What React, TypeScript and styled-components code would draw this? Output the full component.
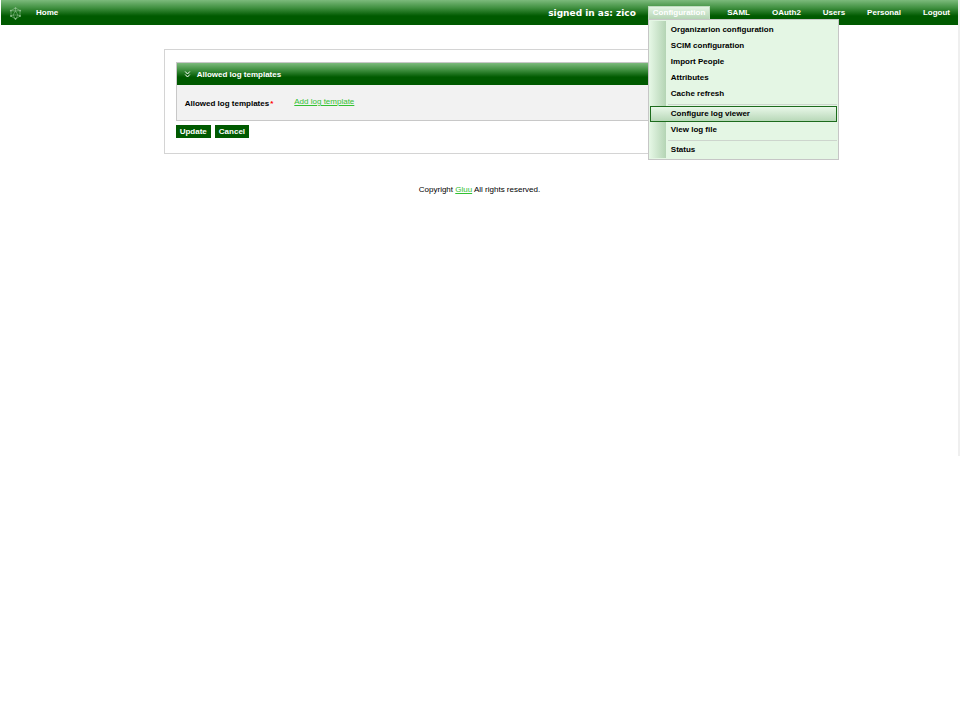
import React from "react";
import styled, { createGlobalStyle, css } from "styled-components";

const GlobalStyle = createGlobalStyle`
  * { box-sizing: border-box; }
  body {
    margin: 0;
    background: #fff;
    color: #000;
    font: 8px/12px "Liberation Sans", Arial, sans-serif;
  }
`;

const barFill = css`
  background: linear-gradient(#7cba7c 0%, #3f8f3f 32%, #005a00 64%, #005a00 100%);
`;

const Page = styled.div`
  min-height: 456px;
  padding-left: 1px;
  border-right: 2px solid #efefef;
`;

const TopBar = styled.header`
  ${barFill}
  display: flex;
  align-items: center;
  height: 25px;
  padding: 0 3px 0 8px;
  color: #fff;
  font-weight: bold;
`;

const HomeLink = styled.a`
  margin-left: 14px;
  color: inherit;
  text-decoration: none;
`;

const SignedIn = styled.span`
  margin: 0 12px 0 auto;
  font: bold 9px/12px "DejaVu Sans", Verdana, sans-serif;
`;

const Nav = styled.nav`
  display: flex;
  gap: 12px;
`;

const NavItem = styled.div`
  position: relative;
`;

const NavButton = styled.button<{ $open?: boolean }>`
  display: block;
  height: 14px;
  padding: 0 4px;
  border: 1px solid ${(p) => (p.$open ? "#c0dcc0" : "transparent")};
  background: ${(p) => (p.$open ? "linear-gradient(#e3f4e3, #b4d4b4)" : "none")};
  color: #fff;
  font: bold 8px/12px "Liberation Sans", Arial, sans-serif;
  white-space: nowrap;
`;

const Menu = styled.div`
  position: absolute;
  z-index: 2;
  top: 100%;
  left: 0;
  width: 191px;
  margin-top: -1px;
  padding: 1px;
  border: 1px solid #c6c6c6;
  background: linear-gradient(90deg, #e4f6e4, #b4d4b4) 1px 1px / 16px calc(100% - 2px) no-repeat #e4f6e4;
`;

const MenuItem = styled.a<{ $active?: boolean }>`
  display: block;
  height: 16px;
  padding-left: 20px;
  border: 1px solid ${(p) => (p.$active ? "#1c6b1c" : "transparent")};
  background: ${(p) => (p.$active ? "linear-gradient(#e8f7e8, #b8d8b8)" : "none")};
  color: #000;
  font-weight: bold;
  line-height: 14px;
  text-decoration: none;
  white-space: nowrap;
`;

const Separator = styled.hr`
  height: 1px;
  margin: 2px 0 1px 18px;
  border: 0;
  background: #cdd5cd;
`;

const MenuGroup = styled.div`
  &:first-child { padding-top: 1px; }
`;

const Box = styled.main`
  width: 66%;
  margin: 24px auto 0;
  padding: 12px 12px 15px 11px;
  border: 1px solid #d4d4d4;
`;

const Panel = styled.section`
  border: 1px solid #c8c8c8;
  background: #f2f2f2;
`;

const PanelHeader = styled.h2`
  ${barFill}
  display: flex;
  align-items: center;
  gap: 6px;
  height: 22px;
  margin: 0;
  padding: 2px 0 0 7px;
  color: #fff;
  font-size: 8px;
`;

const PanelBody = styled.div`
  display: flex;
  gap: 21px;
  height: 35px;
  padding: 11px 8px 0;
`;

const FieldLabel = styled.span`
  padding-top: 2px;
  font-weight: bold;
`;

const Required = styled.span`
  margin-left: 1px;
  color: #f00;
`;

const Link = styled.a`
  color: #32c132;
`;

const Actions = styled.div`
  display: flex;
  gap: 4px;
  margin-top: 4px;
`;

const ActionButton = styled.button`
  height: 13px;
  padding: 1px 4px 0;
  border: 0;
  background: #005a00;
  color: #fff;
  font: bold 8px/12px "Liberation Sans", Arial, sans-serif;
`;

const Footer = styled.footer`
  margin-top: 30px;
  text-align: center;
`;

function Logo() {
  return (
    <svg width="13" height="15" viewBox="0 -2 13 15" fill="none" stroke="#8fc08f" strokeWidth="0.6">
      <path d="M6.5 1 L11 3.5 V9 L6.5 12 L2 9 V3.5 Z M6.5 4 L9 8 H4 Z M2 3.5 L6.5 4 L11 3.5 M2 9 L4 8 M11 9 L9 8 M6.5 1 V4 M6.5 12 L4 8 M6.5 12 L9 8" />
      <g fill="#8fc08f" stroke="none">
        <circle cx="6.5" cy="1.2" r="0.9" />
        <circle cx="1.8" cy="3.6" r="0.9" />
        <circle cx="11.2" cy="3.6" r="0.9" />
        <circle cx="2" cy="9" r="0.9" />
        <circle cx="11" cy="9" r="0.9" />
        <circle cx="6.5" cy="11.8" r="0.9" />
      </g>
    </svg>
  );
}

function Chevrons() {
  return (
    <svg width="7" height="8" viewBox="0 0 7 8" fill="none" stroke="#fff" strokeWidth="1">
      <path d="M1.2 0.5 L3.5 3 L5.8 0.5 M1.2 3.5 L3.5 6 L5.8 3.5" />
    </svg>
  );
}

const menuGroups = [
  ["Organizarion configuration", "SCIM configuration", "Import People", "Attributes", "Cache refresh"],
  ["Configure log viewer", "View log file"],
  ["Status"],
];

export default function App() {
  return (
    <>
      <GlobalStyle />
      <Page>
        <TopBar>
          <Logo />
          <HomeLink href="#">Home</HomeLink>
          <SignedIn>signed in as: zico</SignedIn>
          <Nav>
            <NavItem>
              <NavButton $open aria-expanded="true">Configuration</NavButton>
              <Menu>
                {menuGroups.map((group, i) => (
                  <MenuGroup key={group[0]}>
                    {i > 0 && <Separator />}
                    {group.map((label) => (
                      <MenuItem key={label} href="#" $active={label === "Configure log viewer"}>
                        {label}
                      </MenuItem>
                    ))}
                  </MenuGroup>
                ))}
              </Menu>
            </NavItem>
            {["SAML", "OAuth2", "Users", "Personal", "Logout"].map((label) => (
              <NavItem key={label}>
                <NavButton>{label}</NavButton>
              </NavItem>
            ))}
          </Nav>
        </TopBar>
        <Box>
          <Panel>
            <PanelHeader>
              <Chevrons />
              Allowed log templates
            </PanelHeader>
            <PanelBody>
              <FieldLabel>
                Allowed log templates<Required>*</Required>
              </FieldLabel>
              <Link href="#">Add log template</Link>
            </PanelBody>
          </Panel>
          <Actions>
            <ActionButton>Update</ActionButton>
            <ActionButton>Cancel</ActionButton>
          </Actions>
        </Box>
        <Footer>
          Copyright <Link href="#">Gluu</Link> All rights reserved.
        </Footer>
      </Page>
    </>
  );
}
